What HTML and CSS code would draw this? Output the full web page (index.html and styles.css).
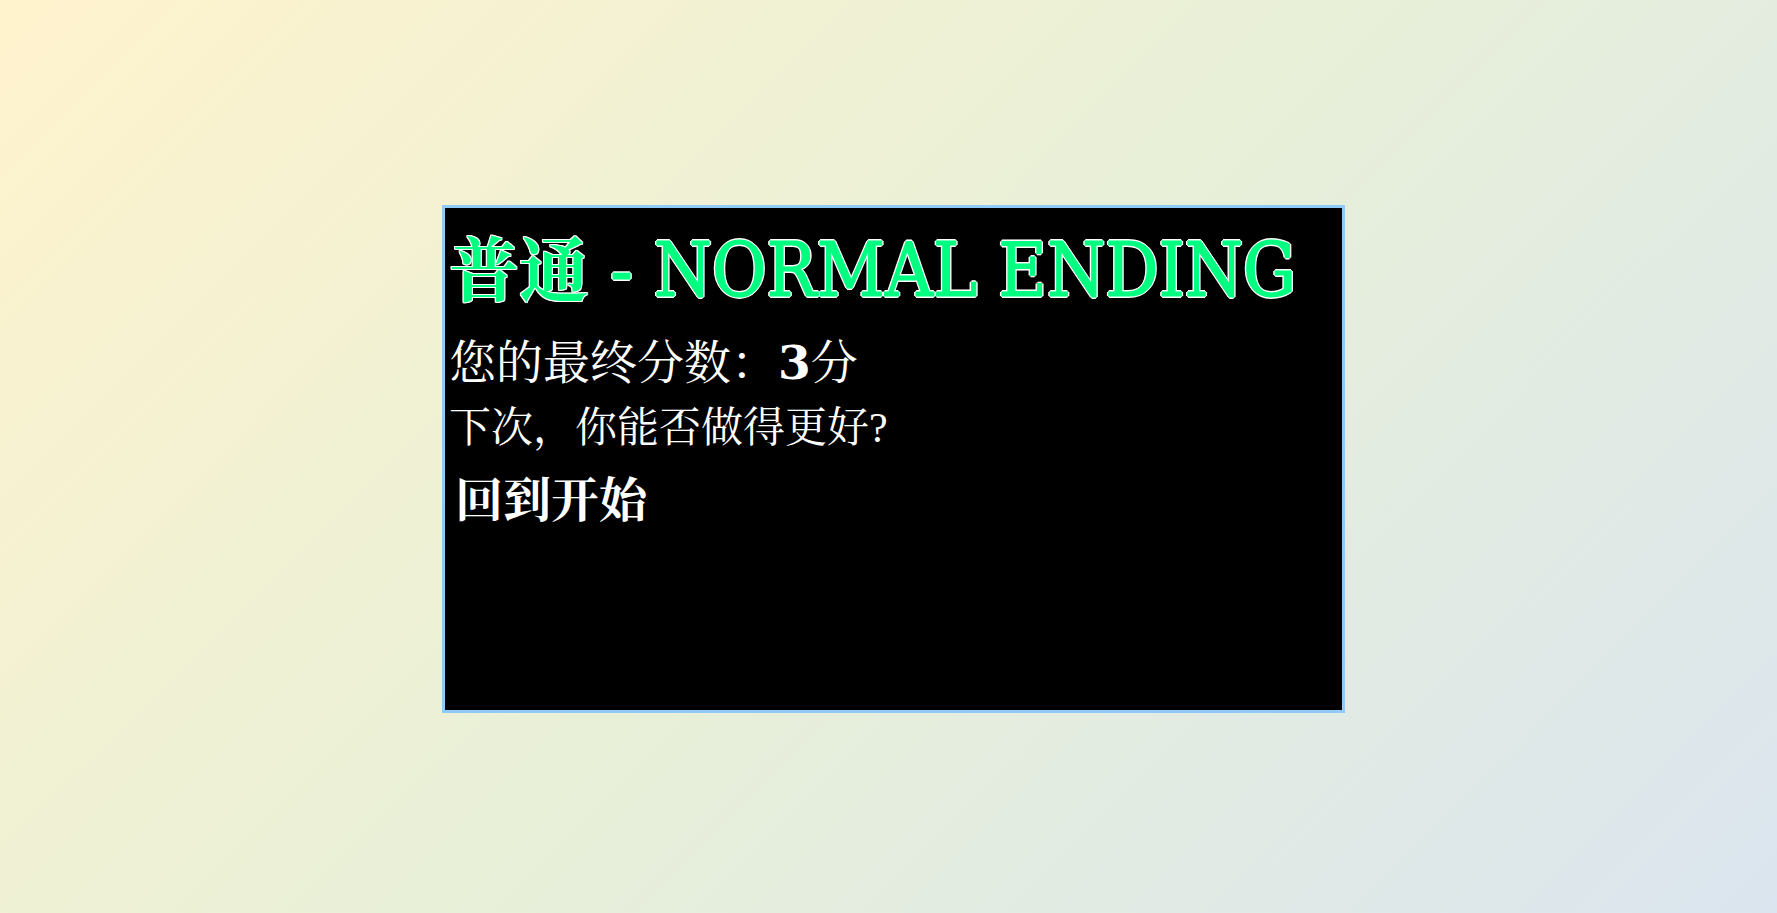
FILE: index.html
```html
<!DOCTYPE html>
<html lang="zh-CN">
<head>
<meta charset="utf-8">
<title>普通 - NORMAL ENDING</title>
<link rel="stylesheet" href="styles.css">
</head>
<body>
<main class="stage">
  <section class="ending">
    <h1 class="ending-title"><span class="title-cjk">普通</span> - NORMAL ENDING</h1>
    <p class="ending-line ending-score">您的最终分数：<strong class="score">3</strong>分</p>
    <p class="ending-line ending-ask">下次，你能否做得更好?</p>
    <button class="restart" type="button">回到开始</button>
  </section>
</main>
</body>
</html>
```
FILE: styles.css
```css
html, body {
  margin: 0;
  height: 100%;
}

body {
  background: linear-gradient(135deg, #fff3cd 0%, #e8f0d8 50%, #dbe5ef 100%);
  font-family: "Liberation Serif", "Noto Serif CJK SC", "Noto Sans CJK SC", serif;
}

.stage {
  min-height: 100%;
  box-sizing: border-box;
  display: flex;
  justify-content: center;
  align-items: center;
  padding-left: 10px;
  padding-top: 5px;
}

.ending {
  box-sizing: border-box;
  width: 903px;
  height: 508px;
  background: #000;
  border: 3px solid #90caf9;
  padding: 0 4px;
  display: flex;
  flex-direction: column;
  align-items: flex-start;
}

.ending-title {
  margin: 15px 0 0;
  font-family: "DejaVu Serif Condensed", "DejaVu Serif", "Noto Serif CJK SC", serif;
  font-size: 74px;
  line-height: 86px;
  font-weight: normal;
  color: #00ff80;
  white-space: nowrap;
  -webkit-text-stroke: 1.2px #00ff80;
  text-shadow:
    2px 0 0 #fff, -2px 0 0 #fff, 0 2px 0 #fff, 0 -2px 0 #fff,
    1px 1px 0 #fff, -1px -1px 0 #fff, 1px -1px 0 #fff, -1px 1px 0 #fff;
}

.title-cjk {
  font-family: "Noto Serif CJK SC", "Noto Sans CJK SC", serif;
  font-size: 70px;
  font-weight: bold;
  -webkit-text-stroke: 0;
  text-shadow:
    1px 0 0 #fff, -1px 0 0 #fff, 0 1px 0 #fff, 0 -1px 0 #fff,
    1px 1px 0 #fff, -1px -1px 0 #fff, 1px -1px 0 #fff, -1px 1px 0 #fff;
}

.ending-line {
  margin: 0;
  color: #fff;
  white-space: nowrap;
}

.ending-score {
  margin-top: 16px;
  font-size: 47px;
  line-height: 67px;
}

.ending-ask {
  font-size: 42px;
  line-height: 62px;
}

.score {
  font-family: "DejaVu Serif", "Liberation Serif", serif;
  font-weight: bold;
}

.restart {
  margin: 12px 0 0;
  padding: 0 6px;
  border: 0;
  background: transparent;
  color: #fff;
  font-family: inherit;
  font-size: 48px;
  line-height: 60px;
  font-weight: bold;
  cursor: pointer;
}
```
